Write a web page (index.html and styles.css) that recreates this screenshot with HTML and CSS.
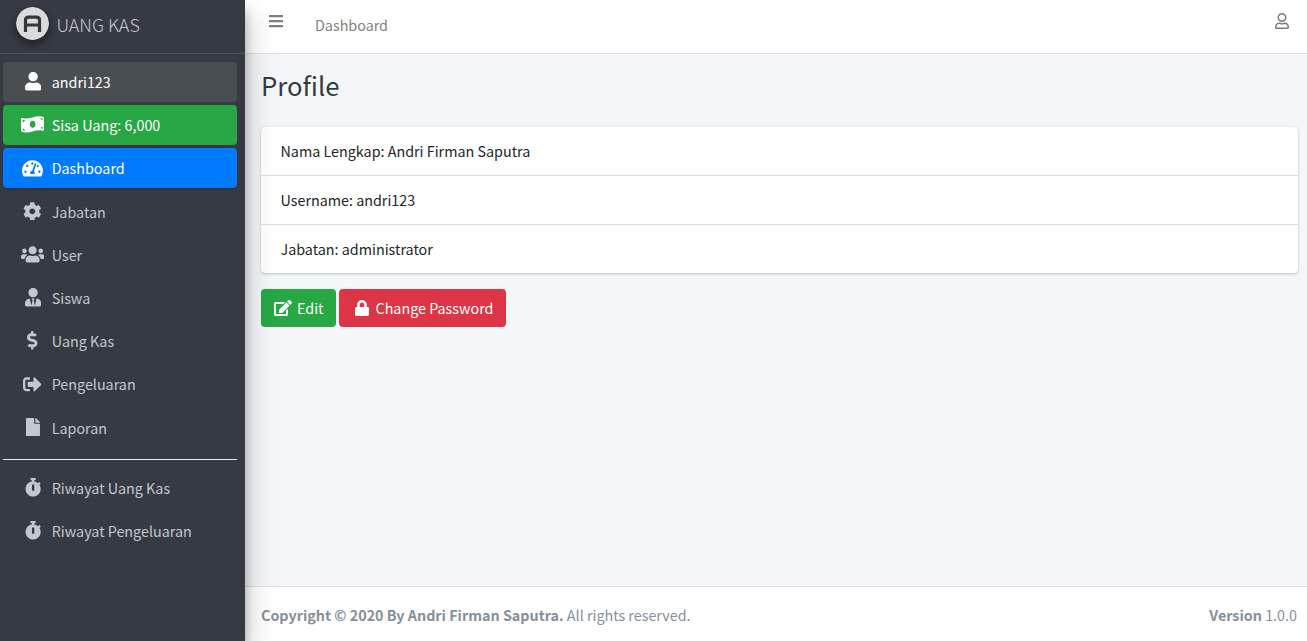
FILE: index.html
```html
<!DOCTYPE html>
<html lang="id">
<head>
<meta charset="utf-8">
<title>Profile</title>
<link rel="stylesheet" href="styles.css">
</head>
<body>
<div class="wrapper">
  <aside class="sidebar">
    <a class="brand">
      <svg class="brand-logo" viewBox="0 0 33 33"><circle cx="16.500" cy="16.500" r="16.500" fill="#d9dadb"/><path d="M9.500 25V13.200q0-3 3-3h8q3 0 3 3V25M10 18h13" fill="none" stroke="#34383e" stroke-width="3.200"/></svg>
      <span class="brand-text">UANG KAS</span>
    </a>
    <nav class="menu">
      <a class="item user"><span class="icon"><svg viewBox="0 0 448 512"><path d="M224 256c70.700 0 128-57.300 128-128S294.700 0 224 0 96 57.300 96 128s57.300 128 128 128zm89.600 32h-16.700c-22.200 10.200-46.900 16-72.900 16s-50.600-5.800-72.900-16h-16.700C60.200 288 0 348.200 0 422.400V464c0 26.500 21.500 48 48 48h352c26.500 0 48-21.500 48-48v-41.600c0-74.200-60.200-134.400-134.400-134.400z"/></svg></span><span>andri123</span></a>
      <a class="item cash"><span class="icon"><svg viewBox="0 0 640 512"><path d="M621.160 54.460C582.370 38.190 543.550 32 504.750 32c-123.170-.01-246.330 62.340-369.500 62.340-30.890 0-61.760-3.920-92.650-13.720-3.470-1.100-6.950-1.620-10.350-1.620C15.040 79 0 92.320 0 110.810v317.260c0 12.630 7.230 24.600 18.840 29.460C57.630 473.810 96.450 480 135.250 480c123.170 0 246.340-62.350 369.510-62.350 30.890 0 61.760 3.920 92.650 13.720 3.470 1.100 6.950 1.620 10.350 1.620 17.210 0 32.250-13.320 32.250-31.810V83.930c-.01-12.640-7.240-24.600-18.850-29.470zM48 132.220c20.120 5.040 41.120 7.570 62.720 8.930C104.840 170.540 79 192.690 48 192.690v-60.470zm0 285v-47.780c34.370 0 62.180 27.270 63.710 61.400-22.530-1.810-43.590-6.310-63.710-13.620zM320 352c-44.190 0-80-42.990-80-96 0-53.020 35.820-96 80-96s80 42.980 80 96c0 53.030-35.830 96-80 96zm272 27.780c-17.520-4.390-35.710-6.850-54.320-8.440 5.870-26.080 27.500-45.880 54.320-49.280v57.720zm0-236.110c-30.890-3.910-54.860-29.700-55.810-61.550 19.540 2.170 38.090 6.230 55.810 13.660v47.890z"/></svg></span><span>Sisa Uang: 6,000</span></a>
      <a class="item active"><span class="icon"><svg viewBox="0 0 576 512"><path d="M288 32C128.940 32 0 160.940 0 320c0 52.800 14.250 102.260 39.060 144.800 5.610 9.620 16.300 15.200 27.440 15.200h443c11.140 0 21.830-5.580 27.440-15.200C561.750 422.260 576 372.800 576 320c0-159.060-128.940-288-288-288zm0 64c14.710 0 26.580 10.130 30.320 23.650-1.110 2.260-2.640 4.230-3.450 6.670l-9.220 27.670c-5.130 3.490-10.970 6.010-17.640 6.010-17.670 0-32-14.330-32-32S270.330 96 288 96zM96 384c-17.670 0-32-14.330-32-32s14.330-32 32-32 32 14.330 32 32-14.330 32-32 32zm48-160c-17.670 0-32-14.330-32-32s14.330-32 32-32 32 14.330 32 32-14.330 32-32 32zm246.770-72.410l-61.330 184C343.130 347.330 352 364.540 352 384c0 11.720-3.380 22.550-8.880 32H232.880c-5.500-9.450-8.880-20.280-8.880-32 0-33.940 26.500-61.430 59.900-63.590l61.340-184.010c4.170-12.560 17.730-19.450 30.360-15.170 12.570 4.190 19.350 17.790 15.170 30.360zm14.660 57.200l15.520-46.550c3.470-1.290 7.130-2.230 11.050-2.230 17.670 0 32 14.330 32 32s-14.330 32-32 32c-11.380-.01-20.890-6.280-26.570-15.220zM480 384c-17.670 0-32-14.330-32-32s14.330-32 32-32 32 14.330 32 32-14.330 32-32 32z"/></svg></span><span>Dashboard</span></a>
      <a class="item"><span class="icon"><svg viewBox="0 0 512 512"><path d="M487.400 315.700l-42.600-24.600c4.300-23.200 4.300-47 0-70.200l42.600-24.600c4.900-2.800 7.100-8.600 5.500-14-11.100-35.600-30-67.800-54.700-94.600-3.800-4.100-10-5.100-14.800-2.300L380.800 110c-17.900-15.400-38.500-27.300-60.800-35.100V25.800c0-5.600-3.900-10.500-9.400-11.700-36.700-8.200-74.300-7.800-109.200 0-5.500 1.200-9.400 6.100-9.400 11.700V75c-22.200 7.900-42.800 19.800-60.800 35.100L88.700 85.500c-4.900-2.800-11-1.900-14.800 2.300-24.700 26.700-43.600 58.900-54.700 94.600-1.700 5.400.6 11.200 5.500 14L67.300 221c-4.300 23.200-4.300 47 0 70.200l-42.600 24.600c-4.900 2.800-7.100 8.600-5.500 14 11.100 35.600 30 67.800 54.700 94.600 3.800 4.100 10 5.100 14.800 2.300l42.600-24.600c17.900 15.400 38.500 27.300 60.800 35.100v49.200c0 5.600 3.900 10.500 9.400 11.700 36.700 8.200 74.300 7.800 109.200 0 5.500-1.200 9.400-6.100 9.400-11.700v-49.200c22.200-7.900 42.800-19.800 60.800-35.100l42.600 24.600c4.900 2.800 11 1.900 14.800-2.300 24.700-26.700 43.600-58.900 54.700-94.600 1.500-5.500-.7-11.300-5.600-14.100zM256 336c-44.100 0-80-35.900-80-80s35.900-80 80-80 80 35.900 80 80-35.900 80-80 80z"/></svg></span><span>Jabatan</span></a>
      <a class="item"><span class="icon"><svg viewBox="0 0 640 512"><path d="M96 224c35.300 0 64-28.700 64-64s-28.700-64-64-64-64 28.700-64 64 28.700 64 64 64zm448 0c35.300 0 64-28.700 64-64s-28.700-64-64-64-64 28.700-64 64 28.700 64 64 64zm32 32h-64c-17.600 0-33.500 7.100-45.100 18.600 40.300 22.100 68.900 62 75.100 109.400h66c17.700 0 32-14.300 32-32v-32c0-35.300-28.700-64-64-64zm-256 0c61.900 0 112-50.100 112-112S381.900 32 320 32 208 82.100 208 144s50.100 112 112 112zm76.800 32h-8.300c-20.800 10-43.900 16-68.500 16s-47.600-6-68.500-16h-8.300C179.600 288 128 339.600 128 403.200V432c0 26.500 21.500 48 48 48h288c26.500 0 48-21.500 48-48v-28.800c0-63.600-51.600-115.200-115.200-115.200zm-223.700-13.400C161.500 263.100 145.600 256 128 256H64c-35.300 0-64 28.700-64 64v32c0 17.700 14.300 32 32 32h65.900c6.300-47.400 34.900-87.300 75.200-109.400z"/></svg></span><span>User</span></a>
      <a class="item"><span class="icon"><svg viewBox="0 0 448 512"><path d="M224 256c70.700 0 128-57.300 128-128S294.700 0 224 0 96 57.300 96 128s57.300 128 128 128zm95.800 32.600L272 480l-32-136 32-56h-96l32 56-32 136-47.800-191.400C56.900 292 0 350.300 0 422.400V464c0 26.500 21.500 48 48 48h352c26.500 0 48-21.500 48-48v-41.600c0-72.100-56.900-130.400-128.200-133.800z"/></svg></span><span>Siswa</span></a>
      <a class="item"><span class="icon"><svg viewBox="0 0 288 512"><path d="M209.200 233.400l-108-31.600C88.700 198.200 80 186.500 80 173.500c0-16.300 13.200-29.500 29.500-29.500h66.300c12.200 0 24.200 3.700 34.200 10.500 6.100 4.100 14.300 3.100 19.500-2l34.800-34c7.100-6.900 6.100-18.400-1.800-24.500C238 74.800 207.400 64.100 176 64V16c0-8.800-7.200-16-16-16h-32c-8.800 0-16 7.200-16 16v48h-2.500C45.800 64-5.400 118.700.5 183.600c4.200 46.100 39.400 83.600 83.800 96.600l102.500 30c12.500 3.700 21.200 15.300 21.200 28.300 0 16.300-13.200 29.500-29.500 29.500h-66.300C100 368 88 364.300 78 357.500c-6.100-4.100-14.300-3.100-19.500 2l-34.800 34c-7.100 6.900-6.100 18.400 1.800 24.500 24.500 19.200 55.100 29.900 86.500 30v48c0 8.800 7.200 16 16 16h32c8.800 0 16-7.200 16-16v-48.200c46.600-.9 90.300-28.600 105.700-72.700 21.500-61.600-14.600-124.800-72.500-141.700z"/></svg></span><span>Uang Kas</span></a>
      <a class="item"><span class="icon"><svg viewBox="0 0 512 512"><path d="M497 273L329 441c-15 15-41 4.500-41-17v-96H152c-13.300 0-24-10.700-24-24v-96c0-13.300 10.700-24 24-24h136V88c0-21.400 25.900-32 41-17l168 168c9.300 9.400 9.300 24.600 0 34zM192 436v-40c0-6.600-5.400-12-12-12H96c-17.700 0-32-14.300-32-32V160c0-17.700 14.300-32 32-32h84c6.600 0 12-5.400 12-12V76c0-6.600-5.400-12-12-12H96c-53 0-96 43-96 96v192c0 53 43 96 96 96h84c6.600 0 12-5.400 12-12z"/></svg></span><span>Pengeluaran</span></a>
      <a class="item"><span class="icon"><svg viewBox="0 0 384 512"><path d="M224 136V0H24C10.700 0 0 10.700 0 24v464c0 13.300 10.700 24 24 24h336c13.300 0 24-10.700 24-24V160H248c-13.200 0-24-10.800-24-24zm160-14.100v6.100H256V0h6.100c6.400 0 12.500 2.500 17 7l97.900 98c4.500 4.500 7 10.600 7 16.900z"/></svg></span><span>Laporan</span></a>
      <hr class="divider">
      <a class="item"><span class="icon"><svg viewBox="0 0 448 512"><path d="M432 304c0 114.900-93.100 208-208 208S16 418.900 16 304c0-104 76.300-190.200 176-205.500V64h-28c-6.600 0-12-5.400-12-12V12c0-6.600 5.400-12 12-12h120c6.600 0 12 5.400 12 12v40c0 6.600-5.400 12-12 12h-28v34.500c37.500 5.800 71.700 21.600 99.700 44.600l27.500-27.500c4.700-4.700 12.300-4.700 17 0l28.300 28.300c4.700 4.700 4.700 12.300 0 17l-29.400 29.400-.6.6C419.700 223.300 432 262.200 432 304zm-176 36V188.500c0-6.600-5.400-12-12-12h-40c-6.600 0-12 5.400-12 12V340c0 6.600 5.400 12 12 12h40c6.600 0 12-5.400 12-12z"/></svg></span><span>Riwayat Uang Kas</span></a>
      <a class="item"><span class="icon"><svg viewBox="0 0 448 512"><path d="M432 304c0 114.900-93.100 208-208 208S16 418.900 16 304c0-104 76.300-190.200 176-205.500V64h-28c-6.600 0-12-5.400-12-12V12c0-6.600 5.400-12 12-12h120c6.600 0 12 5.400 12 12v40c0 6.600-5.400 12-12 12h-28v34.500c37.500 5.800 71.700 21.600 99.700 44.600l27.500-27.500c4.700-4.700 12.300-4.700 17 0l28.300 28.300c4.700 4.700 4.700 12.300 0 17l-29.400 29.400-.6.6C419.700 223.300 432 262.200 432 304zm-176 36V188.500c0-6.600-5.400-12-12-12h-40c-6.600 0-12 5.400-12 12V340c0 6.600 5.400 12 12 12h40c6.600 0 12-5.400 12-12z"/></svg></span><span>Riwayat Pengeluaran</span></a>
    </nav>
  </aside>
  <div class="page">
    <header class="topbar">
      <svg class="topbar-icon" viewBox="0 0 448 512"><path d="M16 132h416c8.800 0 16-7.200 16-16V76c0-8.800-7.200-16-16-16H16C7.200 60 0 67.200 0 76v40c0 8.800 7.200 16 16 16zm0 160h416c8.800 0 16-7.200 16-16v-40c0-8.800-7.200-16-16-16H16c-8.800 0-16 7.200-16 16v40c0 8.800 7.200 16 16 16zm0 160h416c8.800 0 16-7.200 16-16v-40c0-8.800-7.200-16-16-16H16c-8.800 0-16 7.200-16 16v40c0 8.800 7.200 16 16 16z"/></svg>
      <a class="topbar-link">Dashboard</a>
      <svg class="topbar-icon account" viewBox="0 0 448 512"><path d="M313.600 304c-28.700 0-42.500 16-89.600 16-47.100 0-60.800-16-89.600-16C60.200 304 0 364.200 0 438.400V464c0 26.500 21.500 48 48 48h352c26.500 0 48-21.500 48-48v-25.600c0-74.200-60.200-134.400-134.400-134.400zM400 464H48v-25.600c0-47.600 38.800-86.400 86.400-86.400 14.600 0 38.300 16 89.600 16 51.700 0 74.900-16 89.600-16 47.600 0 86.400 38.800 86.400 86.400V464zM224 288c79.500 0 144-64.500 144-144S303.500 0 224 0 80 64.500 80 144s64.500 144 144 144zm0-240c52.900 0 96 43.100 96 96s-43.100 96-96 96-96-43.100-96-96 43.100-96 96-96z"/></svg>
    </header>
    <main class="content">
      <h1 class="title">Profile</h1>
      <ul class="card">
        <li class="row">Nama Lengkap: Andri Firman Saputra</li>
        <li class="row">Username: andri123</li>
        <li class="row">Jabatan: administrator</li>
      </ul>
      <div class="actions">
        <a class="btn edit"><svg viewBox="0 0 576 512"><path d="M402.600 83.200l90.200 90.200c3.800 3.800 3.800 10 0 13.800L274.400 405.600l-92.800 10.300c-12.400 1.400-22.900-9.100-21.500-21.500l10.300-92.800L388.800 83.200c3.800-3.800 10-3.800 13.800 0zm162-22.900l-48.800-48.800c-15.200-15.200-39.900-15.200-55.200 0l-35.400 35.400c-3.800 3.800-3.800 10 0 13.800l90.200 90.200c3.800 3.800 10 3.800 13.800 0l35.400-35.400c15.200-15.300 15.200-40 0-55.200zM384 346.200V448H64V128h229.800c3.200 0 6.200-1.300 8.500-3.500l40-40c7.600-7.600 2.200-20.500-8.500-20.500H48C21.500 64 0 85.500 0 112v352c0 26.500 21.500 48 48 48h352c26.500 0 48-21.500 48-48V306.200c0-10.700-12.900-16-20.500-8.500l-40 40c-2.200 2.300-3.500 5.300-3.500 8.500z"/></svg><span>Edit</span></a>
        <a class="btn password"><svg viewBox="0 0 448 512"><path d="M400 224h-24v-72C376 68.200 307.800 0 224 0S72 68.200 72 152v72H48c-26.500 0-48 21.500-48 48v192c0 26.500 21.500 48 48 48h352c26.500 0 48-21.500 48-48V272c0-26.500-21.500-48-48-48zm-104 0H152v-72c0-39.700 32.300-72 72-72s72 32.300 72 72v72z"/></svg><span>Change Password</span></a>
      </div>
    </main>
    <footer class="footer">
      <span><strong>Copyright © 2020 By Andri Firman Saputra.</strong> All rights reserved.</span>
      <span><strong>Version</strong> 1.0.0</span>
    </footer>
  </div>
</div>
</body>
</html>
```
FILE: styles.css
```css
* { box-sizing: border-box; }
body {
  margin: 0;
  font-family: "Noto Sans CJK SC", "Noto Sans", sans-serif;
  font-size: 14.33px;
  line-height: 24px;
  color: #212529;
  background: #f4f6f9;
}
svg { fill: currentColor; display: block; flex: none; }
.wrapper { display: flex; height: 641px; overflow: hidden; }
.sidebar {
  position: relative;
  z-index: 1;
  width: 245px;
  flex: none;
  background: #363a43;
  box-shadow: 0 14px 28px rgba(0,0,0,.25), 0 10px 10px rgba(0,0,0,.22);
}
.brand {
  display: flex;
  align-items: center;
  gap: 7.500px;
  height: 54px;
  padding: 0 16px 6px;
  border-bottom: 1px solid #4b545c;
}
.brand-logo {
  width: 33px;
  height: 33px;
  border-radius: 50%;
  box-shadow: 0 3px 6px rgba(0,0,0,.16), 0 5px 8px rgba(0,0,0,.3);
}
.brand-text { font-size: 17.9px; font-weight: 300; color: #c6c8cb; }
.menu { display: flex; flex-direction: column; gap: 3.2px; padding: 8px 8px 0 3px; }
.item {
  display: flex;
  align-items: center;
  height: 40px;
  padding-left: 15.700px;
  border-radius: 4px;
  color: #c2c7d0;
}
.icon { width: 28px; margin-right: 5px; padding-bottom: 1px; display: flex; justify-content: center; }
.icon svg { height: 18.6px; }
.user { background: #494e52; color: #fff; }
.cash { background: #28a745; color: #fff; }
.active { background: #007bff; color: #fff; box-shadow: 0 1px 3px rgba(0,0,0,.2); }
.divider { width: 100%; height: 1px; margin: 8.500px 0 4.500px; border: 0; background: #e9ecef; }
.page { flex: 1; display: flex; flex-direction: column; }
.topbar {
  display: flex;
  align-items: flex-start;
  height: 54px;
  padding: 13px 18px 0 24px;
  background: #fff;
  border-bottom: 1px solid #dee2e6;
  color: #7f7f7f;
}
.topbar-icon { width: 14px; height: 16px; }
.topbar-link { margin-left: 32px; }
.account { margin-left: auto; }
.content { flex: 1; padding: 13px 9px 0 16px; }
.title { margin: 0 0 25px; font-size: 25.7px; font-weight: 400; line-height: 35px; color: #343a40; }
.card {
  list-style: none;
  margin: 0 0 16px;
  padding: 0;
  background: #fff;
  border-radius: 4px;
  box-shadow: 0 0 1px rgba(0,0,0,.13), 0 1px 3px rgba(0,0,0,.2);
}
.row { height: 49px; padding: 12px 19.500px 0; border-bottom: 1px solid #dfdfdf; }
.row:last-child { height: 48px; border-bottom: 0; }
.actions { display: flex; gap: 3px; }
.btn { display: flex; align-items: center; height: 38px; border-radius: 4px; color: #fff; padding: 0 13px; white-space: nowrap; }
.btn svg { height: 16px; margin-right: 5px; }
.btn span { padding-bottom: 1px; }
.edit { background: #28a745; width: 75px; }
.password { background: #dc3545; width: 167px; padding-left: 16px; }
.password svg { margin-right: 6.500px; }
.footer {
  display: flex;
  justify-content: space-between;
  height: 55px;
  padding: 16px 10px 0 16px;
  background: #fff;
  border-top: 1px solid #dee2e6;
  color: #869099;
}
```
